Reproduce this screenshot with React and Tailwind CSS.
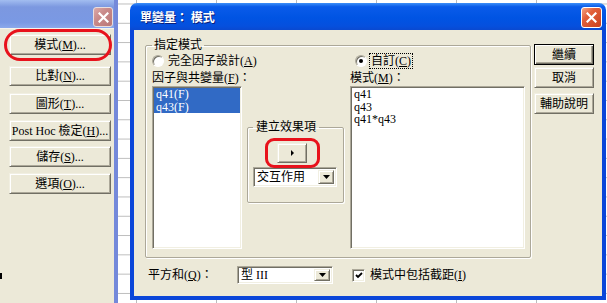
import React from 'react'

const raised = 'bg-[#ece9d8] border border-t-[#f1efe2] border-l-[#f1efe2] border-r-[#716f64] border-b-[#716f64] shadow-[inset_1px_1px_0_#fff,inset_-1px_-1px_0_#aca899]'
const sunken = 'bg-white border border-t-[#aca899] border-l-[#aca899] border-r-white border-b-white shadow-[inset_1px_1px_0_#716f64,inset_-1px_-1px_0_#f1efe2]'

const Btn = ({ children, className = '' }) => (
  <div className={`flex items-center justify-center ${raised} ${className}`}>{children}</div>
)

const Radio = ({ checked }) => (
  <div className="w-[12px] h-[12px] rounded-full bg-white border border-t-[#aca899] border-l-[#aca899] border-r-white border-b-white shadow-[inset_1px_1px_0_#716f64] flex items-center justify-center">
    {checked && <div className="w-[4px] h-[4px] rounded-full bg-black" />}
  </div>
)

const DropArrow = () => (
  <div className={`w-[16px] h-full flex items-center justify-center ${raised}`}>
    <svg width="7" height="4" viewBox="0 0 7 4"><path d="M0 0h7L3.5 4z" fill="#000" /></svg>
  </div>
)

const Combo = ({ text, className = '' }) => (
  <div className={`flex items-stretch p-[2px] ${sunken} ${className}`}>
    <div className="flex-1 flex items-center pl-[1px] leading-[14px]">{text}</div>
    <DropArrow />
  </div>
)

const CloseBtn = ({ active }) => (
  <div
    className={
      active
        ? 'w-[21px] h-[21px] rounded-[3px] border border-white bg-[linear-gradient(135deg,#f4a585,#e2603a_35%,#c9401f)] flex items-center justify-center'
        : 'w-[20px] h-[20px] rounded-[3px] border border-[#e9dede] bg-[linear-gradient(135deg,#dcaaa8,#c98a8a_40%,#b97777)] flex items-center justify-center'
    }
  >
    <svg width="11" height="11" viewBox="0 0 11 11">
      <path d="M1.5 1.5l8 8M9.5 1.5l-8 8" stroke="#fff" strokeWidth="2.2" strokeLinecap="square" />
    </svg>
  </div>
)

export default function App() {
  return (
    <div className="relative w-[607px] h-[303px] overflow-hidden bg-white bg-[linear-gradient(#bcbcbc_1px,transparent_1px),linear-gradient(90deg,#bcbcbc_1px,transparent_1px)] bg-size-[80px_19.3px] bg-position-[56px_3.5px] text-[12px] leading-[14px] text-black [font-family:'Liberation_Serif','Noto_Sans_CJK_TC',serif]">

      {/* back window */}
      <div className="absolute left-0 top-0 w-[118px] h-[303px] flex flex-col border-r-4 border-[#7489da]">
        <div className="h-[28px] flex justify-end items-start pt-[7px] pr-[1px] bg-[linear-gradient(180deg,#a2bdf0,#7c98e0_25%,#7a99e4_80%,#8ba9ec)]">
          <CloseBtn />
        </div>
        <div className="flex-1 flex flex-col bg-[#ece9d8] border-t border-[#f6f4ec] pl-[9px] pt-[5px]">
          <div className="relative">
            <Btn className="w-[102px] h-[21px]">模式(<u>M</u>)...</Btn>
            <div className="absolute left-[-5px] top-[-5px] w-[108px] h-[32px] rounded-[16px] border-[3px] border-[#e8121c]" />
          </div>
          <Btn className="w-[102px] h-[20px] mt-[11px]">比對(<u>N</u>)...</Btn>
          <Btn className="w-[102px] h-[21px] mt-[7px]">圖形(<u>T</u>)...</Btn>
          <Btn className="w-[102px] h-[21px] mt-[6px]">Post Hoc 檢定(<u>H</u>)...</Btn>
          <Btn className="w-[102px] h-[21px] mt-[5px]">儲存(<u>S</u>)...</Btn>
          <Btn className="w-[102px] h-[21px] mt-[6px]">選項(<u>O</u>)...</Btn>
          <div className="w-[2px] h-[6px] bg-black ml-[-9px] mt-[79px]" />
        </div>
      </div>

      {/* dialog */}
      <div className="absolute left-[130px] top-[3px] w-[476px] h-[297px] flex flex-col rounded-t-[7px] overflow-hidden">
        <div className="h-[27px] flex items-center justify-between pl-[10px] pr-[4px] bg-[linear-gradient(180deg,#3d8ff8_0%,#0a5be9_14%,#0054e3_55%,#0550de_85%,#0a49d0_100%)]">
          <span className="text-white font-bold text-[12px] [font-family:'Noto_Sans_CJK_TC',sans-serif] [text-shadow:1px_1px_0_#0a1e7a]">單變量： 模式</span>
          <div className="mt-[2px]"><CloseBtn active /></div>
        </div>

        <div className="flex-1 flex flex-col bg-[#ece9d8] border-x-4 border-b-4 border-[#0a46d9]">
          <div className="flex items-start pl-[11px] pt-[8px]">
            <fieldset className="w-[386px] border border-[#aca899] rounded-[2px] pl-[6px] pr-[5px] pb-[8px] shadow-[inset_1px_1px_0_#fff,1px_1px_0_#fff]">
              <legend className="px-[2px] leading-[14px]">指定模式</legend>

              <div className="flex items-center pt-[2px]">
                <div className="flex items-center w-[203px] h-[14px]">
                  <Radio />
                  <span className="ml-[4px]">完全因子設計(<u>A</u>)</span>
                </div>
                <div className="flex items-center h-[14px]">
                  <Radio checked />
                  <span className="ml-[3px] px-[1px] outline-1 outline-dotted outline-black">自訂(<u>C</u>)</span>
                </div>
              </div>

              <div className="flex mt-[3px]">
                <div className="w-[198px]">因子與共變量(<u>F</u>)：</div>
                <div>模式(<u>M</u>)：</div>
              </div>

              <div className="flex items-start mt-[1px]">
                <div className={`w-[90px] h-[163px] pt-[1px] pl-[1px] pr-[1px] leading-[12.5px] ${sunken}`}>
                  <div className="bg-[#316ac5] text-white pl-[2px]">q41(F)</div>
                  <div className="bg-[#316ac5] text-white pl-[2px]">q43(F)</div>
                </div>

                <fieldset className="ml-[5px] w-[97px] mt-[34px] border border-[#aca899] rounded-[2px] pl-[5px] pb-[15px] shadow-[inset_1px_1px_0_#fff,1px_1px_0_#fff]">
                  <legend className="px-[3px] leading-[14px]">建立效果項</legend>
                  <div className="relative ml-[24px] mt-[9px] w-[30px]">
                    <Btn className="w-[30px] h-[20px]">
                      <svg width="3" height="6" viewBox="0 0 3 6"><path d="M0 0l3 3-3 3z" fill="#000" /></svg>
                    </Btn>
                    <div className="absolute left-[-12px] top-[-5px] w-[55px] h-[30px] rounded-[9px] border-[3px] border-[#e8121c]" />
                  </div>
                  <Combo text="交互作用" className="w-[84px] h-[20px] mt-[4px]" />
                </fieldset>

                <div className={`ml-[6px] w-[175px] h-[163px] pt-[1px] pl-[3px] leading-[12.5px] ${sunken}`}>
                  <div>q41</div>
                  <div>q43</div>
                  <div>q41*q43</div>
                </div>
              </div>
            </fieldset>

            <div className="flex flex-col ml-[3px] mt-[6px]">
              <div className="w-[60px] h-[21px] flex items-center justify-center bg-[#ece9d8] border border-black shadow-[inset_1px_1px_0_#fff,inset_-1px_-1px_0_#716f64,inset_-2px_-2px_0_#aca899]">繼續</div>
              <Btn className="w-[60px] h-[21px] mt-[2px]">取消</Btn>
              <Btn className="w-[60px] h-[21px] mt-[5px]">輔助說明</Btn>
            </div>
          </div>

          <div className="flex items-center pl-[14px] mt-[8px] h-[18px]">
            <div className="w-[89px]">平方和(<u>Q</u>)：</div>
            <Combo text="型 III" className="w-[96px] h-[18px]" />
            <div className={`ml-[19px] w-[13px] h-[13px] flex items-center justify-center ${sunken}`}>
              <svg width="8" height="7" viewBox="0 0 8 7"><path d="M1 3l2 2 4-4" stroke="#000" strokeWidth="1.8" fill="none" /></svg>
            </div>
            <span className="ml-[5px]">模式中包括截距(<u>I</u>)</span>
          </div>
        </div>
      </div>
    </div>
  )
}
